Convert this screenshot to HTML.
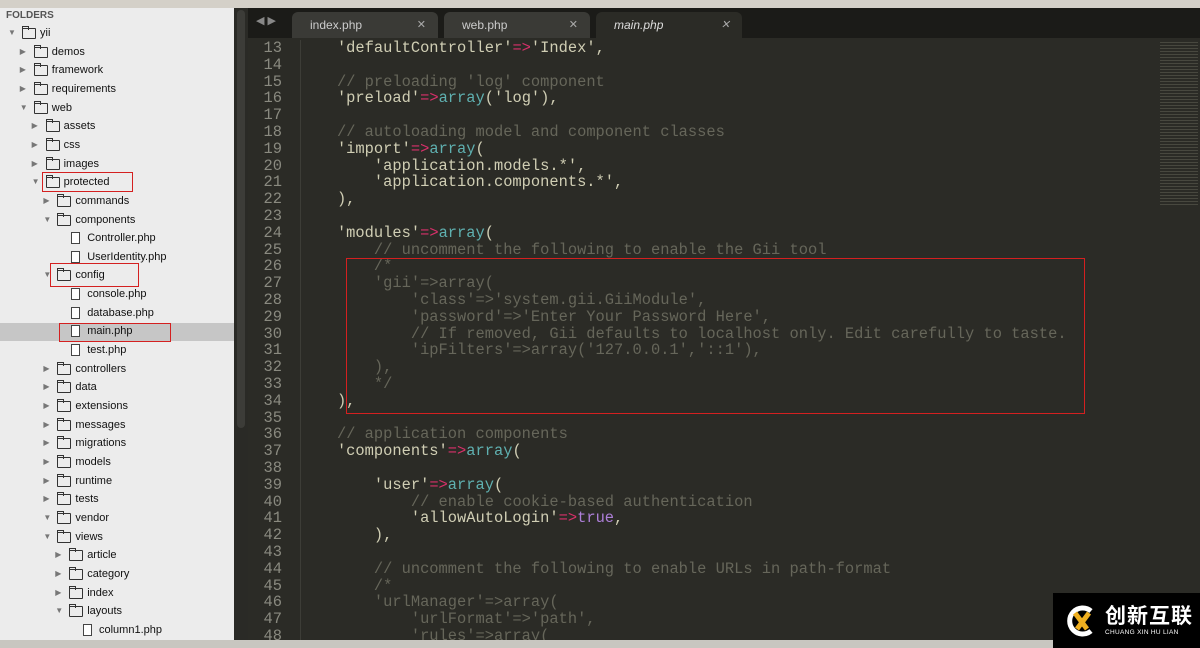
<!DOCTYPE html>
<html><head><meta charset="utf-8"><style>
*{margin:0;padding:0;box-sizing:border-box}
body{width:1200px;height:648px;overflow:hidden;background:#2b2b26;position:relative;font-family:"Liberation Sans",sans-serif}
#top{position:absolute;left:0;top:0;width:1200px;height:8px;background:#d4d0c8}
#side{position:absolute;left:0;top:8px;width:234px;height:632px;background:#ececec}
#sb{position:absolute;left:234px;top:8px;width:14px;height:632px;background:#2a2a26}
#sb div{position:absolute;left:3px;top:2px;width:8px;height:418px;background:#3c3c38;border-radius:4px}
.it{position:absolute;font-size:11px;color:#111;white-space:nowrap;height:18px;line-height:18px}
.ar{position:absolute;font-size:8px;color:#777}
.fd{position:absolute;width:14px;height:11px;border:1px solid #333;border-radius:1px;top:4px}
.fd:before{content:"";position:absolute;left:-1px;top:-3px;width:5px;height:3px;border:1px solid #333;border-bottom:none}
.fl{position:absolute;width:9px;height:12px;border:1px solid #444;top:3px;background:#fff}
#tabs{position:absolute;left:248px;top:8px;width:952px;height:30px;background:#1b1b18}
.tab{position:absolute;top:4px;height:26px;background:#3a3a36;border-radius:6px 6px 0 0;color:#ccc;font-size:12px;line-height:26px;padding-left:18px}
.tab .x{position:absolute;right:12px;top:0;font-size:11px;color:#aaa}
#code{position:absolute;left:248px;top:40px;width:952px;height:600px;font-family:"Liberation Mono",monospace;font-size:15.4px}
.ln{position:absolute;left:0;width:34px;text-align:right;color:#8a8a80;line-height:16.8px}
.cl{position:absolute;left:52px;white-space:pre;color:#d0ceb4;line-height:16.8px}
.c{color:#66665a}.k{color:#5fb0b0}.o{color:#d8306a}.t{color:#ad7fd8}
.guide{position:absolute;top:0;left:52px;width:1px;height:600px;background:#3d3d37}
.red{position:absolute;border:1px solid #d42020}
#status{position:absolute;left:0;top:640px;width:1200px;height:8px;background:#c8c6c0}
#logo{position:absolute;left:1053px;top:593px;width:147px;height:55px;background:#000;color:#fff}
</style></head><body>
<div id="top"></div>
<div id="side">
<div class="it" style="left:6px;top:-1px;font-size:10px;color:#555;font-weight:bold">FOLDERS</div>
</div>
<div style="position:absolute;left:0;top:323px;width:234px;height:18px;background:#c6c6c6"></div>
<div id="tree" style="position:absolute;left:0;top:0"></div>
<div id="sb"><div></div></div>
<div id="tabs">
<div style="position:absolute;left:8px;top:6px;color:#888;font-size:11px">◀ ▶</div>
<div class="tab" style="left:44px;width:146px">index.php<span class="x">✕</span></div>
<div class="tab" style="left:196px;width:146px">web.php<span class="x">✕</span></div>
<div class="tab" style="left:348px;width:146px;background:#2b2b26;font-style:italic;color:#ddd">main.php<span class="x">✕</span></div>
</div>
<div id="code"></div>
<div style="position:absolute;left:1160px;top:40px;width:38px;height:165px;background:repeating-linear-gradient(#2b2b26 0 2px,#55554a 2px 3px);opacity:.7"></div>
<div class="red" style="left:42px;top:172px;width:91px;height:20px"></div>
<div class="red" style="left:50px;top:263px;width:89px;height:24px"></div>
<div class="red" style="left:59px;top:323px;width:112px;height:19px"></div>
<div class="red" style="left:346px;top:258px;width:739px;height:156px"></div>
<div id="status"></div>
<div id="logo">
<svg style="position:absolute;left:12px;top:12px" width="34" height="32" viewBox="0 0 34 32"><path d="M26 6A13 13 0 1 0 26 26" fill="none" stroke="#fff" stroke-width="5"/><path d="M10 8L22 24M24 8L12 24" stroke="#f0b020" stroke-width="5"/></svg>
<div style="position:absolute;left:52px;top:10px;font-size:21px;font-family:'Noto Sans CJK SC',sans-serif;font-weight:bold;letter-spacing:1px;line-height:24px">创新互联</div>
<div style="position:absolute;left:52px;top:36px;font-size:6.5px;letter-spacing:.3px">CHUANG XIN HU LIAN</div>
</div>
<script>
var T=[[0,1,'yii',1],[1,0,'demos',1],[1,0,'framework',1],[1,0,'requirements',1],[1,1,'web',1],[2,0,'assets',1],[2,0,'css',1],[2,0,'images',1],[2,1,'protected',1],[3,0,'commands',1],[3,1,'components',1],[4,2,'Controller.php',0],[4,2,'UserIdentity.php',0],[3,1,'config',1],[4,2,'console.php',0],[4,2,'database.php',0],[4,2,'main.php',0],[4,2,'test.php',0],[3,0,'controllers',1],[3,0,'data',1],[3,0,'extensions',1],[3,0,'messages',1],[3,0,'migrations',1],[3,0,'models',1],[3,0,'runtime',1],[3,0,'tests',1],[3,1,'vendor',1],[3,1,'views',1],[4,0,'article',1],[4,0,'category',1],[4,0,'index',1],[4,1,'layouts',1],[5,2,'column1.php',0]];
var h='';T.forEach(function(r,i){var y=24+i*18.65,x=12+r[0]*11.8;
if(r[1]<2)h+='<div class="ar" style="left:'+(x-4)+'px;top:'+(y+4)+'px">'+(r[1]?'▼':'▶')+'</div>';
if(r[3])h+='<div class="fd" style="left:'+(x+10)+'px;top:'+(y+4)+'px"></div>';else h+='<div class="fl" style="left:'+(x+12)+'px;top:'+(y+3)+'px"></div>';
h+='<div class="it" style="left:'+(x+28)+'px;top:'+y+'px">'+r[2]+'</div>';});
document.getElementById('tree').innerHTML=h;
var L=[
"    <s>'defaultController'</s><o>=></o><s>'Index'</s>,","","    <c>// preloading 'log' component</c>","    'preload'<o>=></o><k>array</k>('log'),","",
"    <c>// autoloading model and component classes</c>","    'import'<o>=></o><k>array</k>(","        'application.models.*',","        'application.components.*',","    ),","",
"    'modules'<o>=></o><k>array</k>(","        <c>// uncomment the following to enable the Gii tool</c>","        <c>/*</c>","<c>        'gii'=>array(</c>","<c>            'class'=>'system.gii.GiiModule',</c>","<c>            'password'=>'Enter Your Password Here',</c>","<c>            // If removed, Gii defaults to localhost only. Edit carefully to taste.</c>","<c>            'ipFilters'=>array('127.0.0.1','::1'),</c>","<c>        ),</c>","<c>        */</c>","    ),","",
"    <c>// application components</c>","    'components'<o>=></o><k>array</k>(","","        'user'<o>=></o><k>array</k>(","            <c>// enable cookie-based authentication</c>","            'allowAutoLogin'<o>=></o><t>true</t>,","        ),","",
"        <c>// uncomment the following to enable URLs in path-format</c>","        <c>/*</c>","<c>        'urlManager'=>array(</c>","<c>            'urlFormat'=>'path',</c>","<c>            'rules'=>array(</c>"];
var c='<div class="guide"></div>';
L.forEach(function(s,i){var y=i*16.8;s=s.replace(/<s>|<\/s>/g,'').replace(/<c>/g,'<span class="c">').replace(/<\/c>/g,'</span>').replace(/<k>/g,'<span class="k">').replace(/<\/k>/g,'</span>').replace(/<o>=><\/o>/g,'<span class="o">=&gt;</span>').replace(/<t>/g,'<span class="t">').replace(/<\/t>/g,'</span>').replace(/=>(?![^<]*<\/span>)/g,'=&gt;');
c+='<div class="ln" style="top:'+y+'px">'+(13+i)+'</div><div class="cl" style="top:'+y+'px">'+s+'</div>';});
document.getElementById('code').innerHTML=c;
</script>
</body></html>
